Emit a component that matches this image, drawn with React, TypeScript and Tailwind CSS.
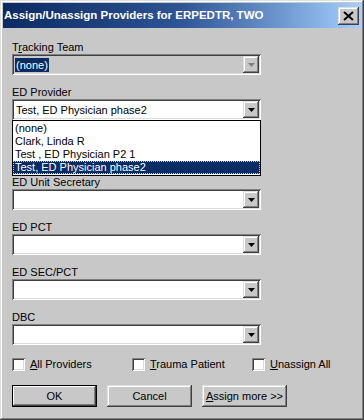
import React from 'react';

const raised =
  'shadow-[inset_-1px_-1px_#404040,inset_1px_1px_#e0e0e0,inset_-2px_-2px_#808080,inset_2px_2px_#ffffff]';
const sunken =
  'shadow-[inset_1px_1px_#808080,inset_-1px_-1px_#ffffff,inset_2px_2px_#404040,inset_-2px_-2px_#dcdcdc]';

const fields = [
  { label: 'ED Unit Secretary' },
  { label: 'ED PCT' },
  { label: 'ED SEC/PCT' },
  { label: 'DBC' },
];

const options = ['(none)', 'Clark, Linda R', 'Test , ED Physician P2 1', 'Test, ED Physician phase2'];

function Arrow({ disabled }: { disabled?: boolean }) {
  return (
    <svg width="7" height="4" viewBox="0 0 7 4">
      <path d="M0 0h7L3.5 4z" fill={disabled ? '#808080' : '#000'} />
    </svg>
  );
}

function Combo({ value, disabled, highlight }: { value?: string; disabled?: boolean; highlight?: boolean }) {
  return (
    <div className={`relative flex h-[21px] w-[249px] items-center p-[2px] ${sunken} ${disabled ? 'bg-[#c8c8c8]' : 'bg-white'}`}>
      <div className="flex flex-1 items-center pl-[1px]">
        {value && (
          <span className={`px-[1px] leading-[14px] ${highlight ? 'bg-[#0a2c64] text-white' : 'text-black'}`}>{value}</span>
        )}
      </div>
      <div className={`flex h-[17px] w-[16px] items-center justify-center bg-[#c8c8c8] ${raised}`}>
        <Arrow disabled={disabled} />
      </div>
    </div>
  );
}

function Field({ label, children }: { label: React.ReactNode; children: React.ReactNode }) {
  return (
    <div className="flex flex-col">
      <div className="h-[13px] leading-[13px]">{label}</div>
      {children}
    </div>
  );
}

function Check({ label }: { label: React.ReactNode }) {
  return (
    <div className="flex items-center gap-[5px]">
      <div className={`h-[13px] w-[13px] bg-white ${sunken}`} />
      <span className="leading-[13px]">{label}</span>
    </div>
  );
}

export default function App() {
  return (
    <div
      className={`flex h-[420px] w-[364px] flex-col bg-[#c8c8c8] p-[3px] text-[11px] text-black ${raised}`}
      style={{ fontFamily: '"Liberation Sans", Arial, sans-serif' }}
    >
      <div className="flex h-[25px] items-center justify-between bg-gradient-to-r from-[#0a2a62] via-[#2f5596] to-[#a6d0ff] pl-[1px] pr-[2px]">
        <span className="text-[11.5px] font-bold text-white">Assign/Unassign Providers for ERPEDTR, TWO</span>
        <div className={`flex h-[18px] w-[21px] items-center justify-center bg-[#c8c8c8] ${raised}`}>
          <svg width="11" height="10" viewBox="0 0 11 10">
            <path d="M1 1L10 9M10 1L1 9" stroke="#000" strokeWidth="2" />
          </svg>
        </div>
      </div>

      <div className="relative flex flex-col gap-[11px] px-[9px] pt-[13px]">
        <Field label={<>T<u>r</u>acking Team</>}>
          <Combo value="(none)" disabled highlight />
        </Field>
        <div className="relative">
          <Field label="ED Provider">
            <Combo value="Test, ED Physician phase2" />
          </Field>
          <div className="absolute left-0 top-[34px] z-10 flex w-[249px] flex-col border border-black bg-white py-[1px]">
            {options.map((o, i) => (
              <div
                key={o}
                className={`h-[13px] pl-[2px] leading-[13px] ${
                  i === options.length - 1 ? 'bg-[#0a2c64] text-white outline-1 outline-dotted outline-[#c8c8c8] -outline-offset-1' : ''
                }`}
              >
                {o}
              </div>
            ))}
          </div>
        </div>
        {/* field hidden behind the open list */}
        <div className="h-[34px]" />
        {fields.map((f) => (
          <Field key={f.label} label={f.label}>
            <Combo />
          </Field>
        ))}

        <div className="mt-[2px] flex">
          <div className="w-[120px]">
            <Check label={<><u>A</u>ll Providers</>} />
          </div>
          <div className="w-[120px]">
            <Check label={<><u>T</u>rauma Patient</>} />
          </div>
          <Check label={<><u>U</u>nassign All</>} />
        </div>

        <div className="mt-[3px] flex gap-[10px]">
          <div className="flex h-[22px] w-[85px] items-center justify-center border border-black bg-[#c8c8c8] shadow-[inset_-1px_-1px_#404040,inset_1px_1px_#ffffff,inset_-2px_-2px_#808080]">
            OK
          </div>
          <div className={`flex h-[22px] w-[85px] items-center justify-center bg-[#c8c8c8] ${raised}`}>Cancel</div>
          <div className={`flex h-[22px] w-[85px] items-center justify-center bg-[#c8c8c8] ${raised}`}>
            <span><u>A</u>ssign more &gt;&gt;</span>
          </div>
        </div>
      </div>
    </div>
  );
}
